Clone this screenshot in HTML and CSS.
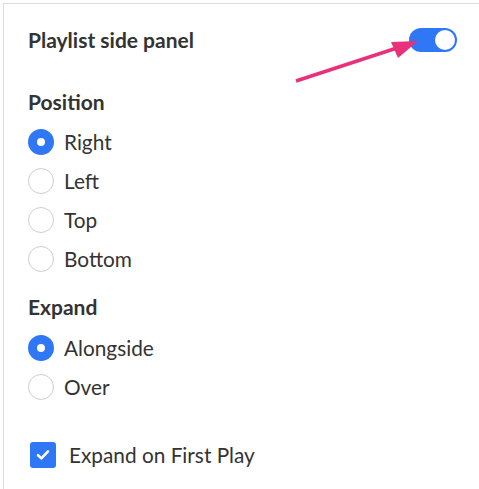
FILE: index.html
```html
<!DOCTYPE html>
<html lang="en">
<head>
<meta charset="utf-8">
<title>Playlist side panel</title>
<link rel="stylesheet" href="styles.css">
</head>
<body>
<div class="panel">
  <div class="header">
    <span class="title">Playlist side panel</span>
    <span class="toggle"><span class="knob"></span></span>
  </div>

  <div class="section-title first">Position</div>
  <div class="options">
    <label class="radio-row"><span class="radio checked"></span><span class="label">Right</span></label>
    <label class="radio-row"><span class="radio"></span><span class="label">Left</span></label>
    <label class="radio-row"><span class="radio"></span><span class="label">Top</span></label>
    <label class="radio-row"><span class="radio"></span><span class="label">Bottom</span></label>
  </div>

  <div class="section-title second">Expand</div>
  <div class="options">
    <label class="radio-row"><span class="radio checked"></span><span class="label">Alongside</span></label>
    <label class="radio-row"><span class="radio"></span><span class="label">Over</span></label>
  </div>

  <label class="check-row">
    <span class="checkbox">
      <svg width="14" height="12" viewBox="0 0 14 12"><path d="M2 6.2 L5.4 9.4 L12 2.4" fill="none" stroke="#fff" stroke-width="2.6" stroke-linecap="round" stroke-linejoin="round"/></svg>
    </span>
    <span class="label">Expand on First Play</span>
  </label>
</div>

<svg class="arrow" width="479" height="120" viewBox="0 0 479 120">
  <line x1="296" y1="81" x2="400" y2="47" stroke="#e8317a" stroke-width="3.6"/>
  <polygon points="391,42 398,58 418,41" fill="#e8317a"/>
</svg>
</body>
</html>
```

FILE: styles.css
```css
html, body {
  margin: 0;
  padding: 0;
  background: #fff;
}

body {
  font-family: Lato, "Open Sans", "Liberation Sans", sans-serif;
  color: #333;
  position: relative;
  width: 479px;
  height: 489px;
  overflow: hidden;
}

.panel {
  margin: 3px 0 0 3px;
  border-left: 1px solid #dcdcdc;
  border-top: 1px solid #dcdcdc;
  padding: 24px 22px 30px 24px;
}

.header {
  display: flex;
  align-items: center;
  justify-content: space-between;
  height: 24px;
}

.title,
.section-title {
  font-size: 21px;
  font-weight: 700;
  line-height: 24px;
  color: #333;
}

.section-title.first {
  margin-top: 38px;
  margin-bottom: 8px;
}

.section-title.second {
  margin-top: 17px;
  margin-bottom: 9px;
}

.toggle {
  width: 48px;
  height: 24px;
  border-radius: 12px;
  background: #3077f6;
  display: flex;
  align-items: center;
  justify-content: flex-end;
  padding: 0 2px;
  box-sizing: border-box;
}

.knob {
  width: 20px;
  height: 20px;
  border-radius: 50%;
  background: #fff;
}

.options {
  display: flex;
  flex-direction: column;
}

.radio-row,
.check-row {
  display: flex;
  align-items: center;
  height: 39px;
}

.radio {
  width: 26px;
  height: 26px;
  border-radius: 50%;
  border: 1px solid #cfcfcf;
  box-sizing: border-box;
  background: #fff;
  flex: none;
}

.radio.checked {
  border: 9px solid #3077f6;
  background: #fff;
}

.label {
  font-size: 20.8px;
  line-height: 24px;
  color: #333;
  margin-left: 10px;
}

.check-row {
  margin-top: 29px;
  padding-left: 2px;
}

.checkbox {
  width: 26px;
  height: 26px;
  border-radius: 3px;
  background: #3077f6;
  display: flex;
  align-items: center;
  justify-content: center;
  flex: none;
}

.check-row .label {
  margin-left: 13px;
}

.arrow {
  position: absolute;
  left: 0;
  top: 0;
  pointer-events: none;
}
```
